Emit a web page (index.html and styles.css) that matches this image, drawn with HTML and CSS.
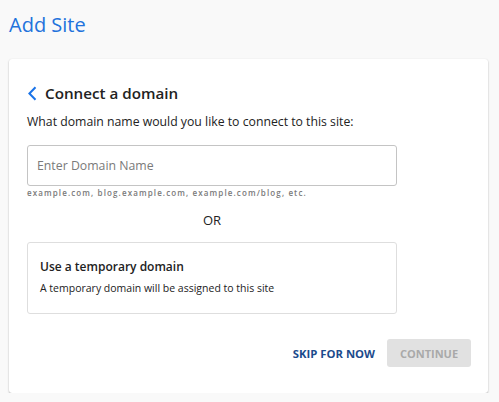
FILE: index.html
```html
<!DOCTYPE html>
<html>
<head>
<meta charset="utf-8">
<link rel="stylesheet" href="styles.css">
</head>
<body>
<div class="page">
  <h1 class="title">Add Site</h1>
  <div class="card">
    <div class="heading">
      <svg class="back" width="10" height="15" viewBox="0 0 10 15"><path d="M8.5 1.2 L2.4 7.5 L8.5 13.8" fill="none" stroke="#1a73e8" stroke-width="2"/></svg>
      <span>Connect a domain</span>
    </div>
    <p class="question">What domain name would you like to connect to this site:</p>
    <div class="field">
      <input class="input" type="text" placeholder="Enter Domain Name">
      <div class="hint">example.com, blog.example.com, example.com/blog, etc.</div>
      <div class="or">OR</div>
      <div class="option">
        <div class="option-title">Use a temporary domain</div>
        <div class="option-desc">A temporary domain will be assigned to this site</div>
      </div>
    </div>
    <div class="actions">
      <button class="btn-skip">SKIP FOR NOW</button>
      <button class="btn-continue" disabled>CONTINUE</button>
    </div>
  </div>
</div>
</body>
</html>
```

FILE: styles.css
```css
* { box-sizing: border-box; }
html, body { margin: 0; padding: 0; }
body {
  background: #f9f9f9;
  font-family: "Open Sans", "Liberation Sans", sans-serif;
  color: #222;
}
.page {
  padding: 10px 11px 0 9px;
}
.title {
  margin: 0;
  font-size: 20px;
  font-weight: 400;
  line-height: 29px;
  color: #2272dc;
}
.card {
  margin-top: 20px;
  background: #fff;
  border-radius: 3px;
  box-shadow: 0 1px 2px rgba(0,0,0,0.28), 0 0 1px rgba(0,0,0,0.08);
  padding: 23px 17px 26px 18px;
}
.heading {
  display: flex;
  align-items: center;
  gap: 8px;
  font-size: 15.2px;
  font-weight: 600;
  line-height: 22px;
  color: #222;
}
.back { display: block; margin-top: 1px; }
.question {
  margin: 9px 0 0;
  font-size: 12.25px;
  line-height: 18px;
}
.field {
  width: 370px;
  margin-top: 14px;
}
.input {
  display: block;
  width: 100%;
  height: 41px;
  border: 1px solid #c4c4c4;
  border-radius: 3px;
  padding: 0 9px;
  font-family: inherit;
  font-size: 12.3px;
  color: #222;
  outline: none;
}
.input::placeholder { color: #7a7a7a; }
.hint {
  margin-top: 1px;
  font-size: 8px;
  font-weight: 600;
  letter-spacing: 1.12px;
  line-height: 12px;
  color: #7a7a7a;
}
.or {
  margin-top: 12px;
  text-align: center;
  font-size: 13px;
  line-height: 18px;
  color: #222;
}
.option {
  margin-top: 13px;
  border: 1px solid #dedede;
  border-radius: 3px;
  padding: 15px 12px 17px;
}
.option-title {
  font-size: 12px;
  font-weight: 600;
  line-height: 18px;
}
.option-desc {
  margin-top: 4px;
  font-size: 10.5px;
  line-height: 16px;
}
.actions {
  display: flex;
  justify-content: flex-end;
  align-items: center;
  gap: 4px;
  margin-top: 25px;
}
button {
  font-family: inherit;
  font-size: 11px;
  font-weight: 700;
  border: none;
  border-radius: 3px;
  height: 28px;
  cursor: pointer;
}
.btn-skip {
  background: transparent;
  color: #1c4b8c;
  padding: 0 8px;
  font-size: 11.3px;
}
.btn-continue {
  width: 84px;
  background: #e1e1e1;
  color: #a9a9a9;
  padding: 0;
}
```
